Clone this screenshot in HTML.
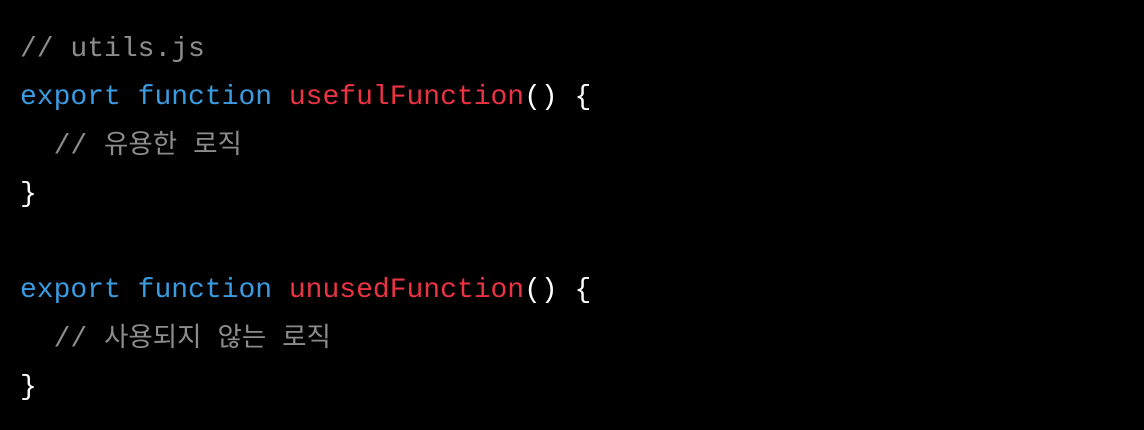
<!DOCTYPE html>
<html><head><meta charset="utf-8"><style>
html,body{margin:0;padding:0;background:#000;width:1144px;height:430px;overflow:hidden}
pre{margin:0;padding:26px 0 0 20px;font-family:"Liberation Mono","Noto Sans CJK KR",monospace;font-size:28px;line-height:48px;color:#fff}
.c{color:#8c8c8c}.k{color:#3b9be0}.f{color:#eb3343}
.ko{font-size:26.5px}
</style></head><body><pre><span class="c">// utils.js</span>
<span class="k">export</span> <span class="k">function</span> <span class="f">usefulFunction</span>() {
  <span class="c">// <span class="ko">유용한 로직</span></span>
}

<span class="k">export</span> <span class="k">function</span> <span class="f">unusedFunction</span>() {
  <span class="c">// <span class="ko">사용되지 않는 로직</span></span>
}</pre></body></html>
